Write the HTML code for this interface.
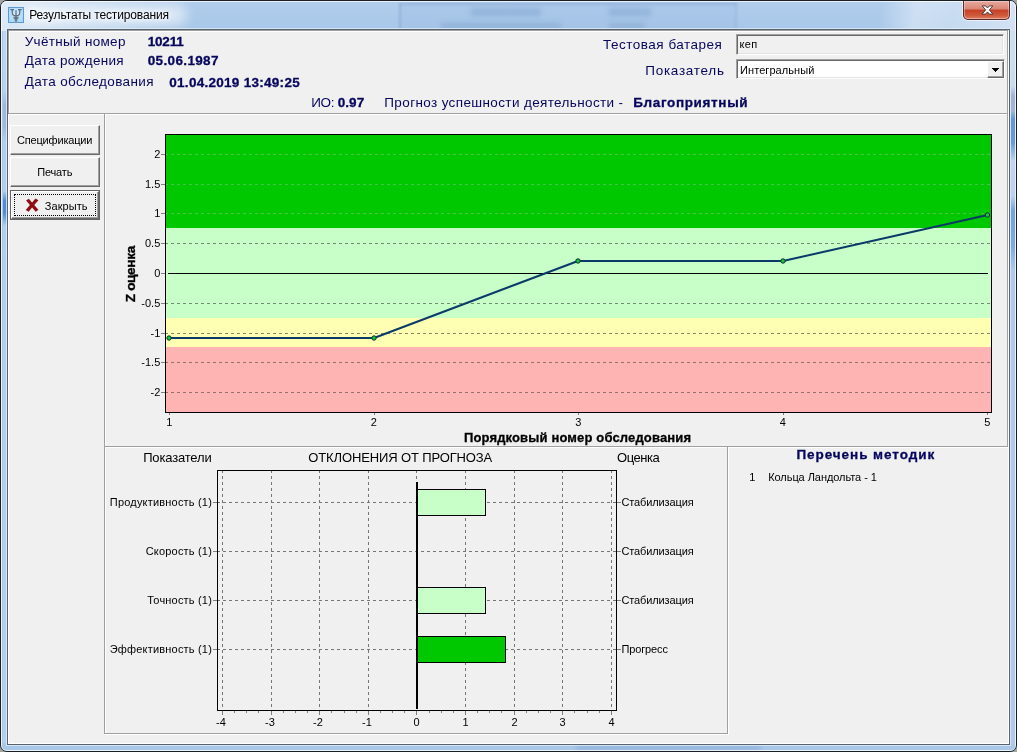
<!DOCTYPE html>
<html lang="ru"><head><meta charset="utf-8"><title>Результаты тестирования</title>
<style>
html,body{margin:0;padding:0;}
body{width:1017px;height:752px;overflow:hidden;background:#a4a4a0;position:relative;font-family:"Liberation Sans",sans-serif;}
.abs{position:absolute;}
.t{position:absolute;white-space:nowrap;color:#000;}
#win{position:absolute;left:0;top:0;width:1015px;height:750px;border:1px solid #1a1f26;border-radius:7px;overflow:hidden;
 background:#aac9e9;}
#glass{position:absolute;left:0;top:0;width:1015px;height:30px;
 background:
  linear-gradient(90deg,rgba(255,255,255,.6) 0px,rgba(255,255,255,.3) 70px,rgba(255,255,255,0) 175px),
  linear-gradient(100deg,rgba(255,255,255,0) 868px,rgba(255,255,255,.4) 903px,rgba(255,255,255,.33) 940px,rgba(255,255,255,.5) 1015px),
  linear-gradient(180deg,#b1cdec 0,#a8c7e8 28px,#a9c8e8 100%);}
#behind{position:absolute;left:398px;top:2px;width:338px;height:27px;background:rgba(110,155,215,.07);box-shadow:inset 2px 2px 1px rgba(70,110,170,.22),inset -2px 0 1px rgba(70,110,170,.12);filter:blur(1.2px);}
.bl{position:absolute;background:rgba(70,110,170,.2);filter:blur(2.5px);}
#hl{position:absolute;left:0;top:0;width:1013px;height:748px;border:1px solid rgba(255,255,255,.75);border-radius:6px 6px 5px 5px;}
#inner{position:absolute;left:6px;top:28px;width:1001px;height:714px;border:1px solid #59636e;box-shadow:0 0 0 1px rgba(225,236,248,.8);background:#f0f0f0;}
#client{position:absolute;left:8px;top:30px;width:1001px;height:714px;background:#f0f0f0;}
.etch{position:absolute;box-sizing:border-box;border:1px solid #a0a0a0;box-shadow:inset 1px 1px 0 #fff,1px 1px 0 #fff;}
.panel{position:absolute;box-sizing:border-box;border:1px solid;border-color:#a0a0a0 #fff #fff #a0a0a0;}
.btn{position:absolute;box-sizing:border-box;background:#f0f0f0;border:1px solid;border-color:#fff #696969 #696969 #fff;box-shadow:inset -1px -1px 0 #a0a0a0,inset 1px 1px 0 #f0f0f0;}
.edit{position:absolute;box-sizing:border-box;border:1px solid;border-color:#a0a0a0 #fff #fff #a0a0a0;box-shadow:inset 1px 1px 0 #696969,inset -1px -1px 0 #e3e3e3;}
#closebtn{position:absolute;left:962px;top:0;width:47px;height:19px;box-sizing:border-box;border:1px solid #5b2a2a;border-top:none;border-radius:0 0 5px 5px;
 background:linear-gradient(180deg,#e6a99d 0,#d98676 45%,#c63f26 50%,#cf5a3a 80%,#dd8064 100%);box-shadow:inset 0 0 0 1px rgba(255,255,255,.35),0 0 0 1px rgba(255,255,255,.55);}
#icon{position:absolute;left:7px;top:6px;width:16px;height:16px;}
#ov{position:absolute;left:0;top:0;width:1017px;height:752px;will-change:transform;}
#ls{position:absolute;left:2px;top:30px;width:4px;height:712px;background:linear-gradient(180deg,rgba(255,255,255,.25) 0,rgba(255,255,255,.2) 60px,rgba(150,170,195,.55) 75px,rgba(150,170,195,.5) 95px,rgba(255,255,255,.1) 110px,rgba(255,255,255,.1) 160px,rgba(50,120,210,.75) 170px,rgba(50,120,210,.75) 182px,rgba(255,255,255,.12) 195px,rgba(255,255,255,.12) 100%);}
#rs{position:absolute;left:1010px;top:30px;width:4px;height:712px;background:linear-gradient(180deg,rgba(255,255,255,.4) 0,rgba(255,255,255,.35) 55px,rgba(150,168,192,.6) 65px,rgba(150,168,192,.55) 80px,rgba(70,130,210,.7) 88px,rgba(70,130,210,.65) 112px,rgba(255,255,255,.25) 130px,rgba(255,255,255,.2) 165px,rgba(70,130,210,.55) 180px,rgba(70,130,210,.45) 215px,rgba(255,255,255,.05) 240px,rgba(255,255,255,.05) 100%);}
#tglow{position:absolute;left:18px;top:3px;width:168px;height:22px;border-radius:11px;background:rgba(255,255,255,.55);filter:blur(6px);}
#bdark{position:absolute;left:575px;top:744px;width:185px;height:5px;background:rgba(90,130,185,.28);filter:blur(2px);}

</style></head>
<body>
<div id="win">
 <div id="glass"></div>
 <div id="behind"></div>
 <div class="bl" style="left:470px;top:7px;width:70px;height:8px"></div>
 <div class="bl" style="left:440px;top:22px;width:120px;height:6px"></div>
 <div class="bl" style="left:608px;top:7px;width:42px;height:8px"></div>
 <div class="bl" style="left:608px;top:22px;width:36px;height:6px"></div>
 <div id="ls"></div>
 <div id="rs"></div>
 <div id="bdark"></div>
 <div id="tglow"></div>
 <div id="hl"></div>
 <div id="inner"></div>
 <svg id="icon" viewBox="0 0 16 16">
  <defs><radialGradient id="ig" cx="50%" cy="45%" r="60%"><stop offset="0" stop-color="#d2ebfc"/><stop offset="1" stop-color="#a6d6f8"/></radialGradient></defs>
  <rect x="0.5" y="0.5" width="15" height="15" fill="url(#ig)" stroke="#5f96d4"/>
  <path d="M2.2 2.7 H6 M10 2.7 H13.8 M4.3 2.7 V6.3 C4.3 8.2 6 8.8 8 8.8 C10 8.8 11.7 8.2 11.7 6.3 V2.7 M8 3.2 V15" fill="none" stroke="#56646f" stroke-width="1.25" opacity=".9"/>
  <path d="M5.4 10.4 H10.6 M5.8 11.6 H10.2 M6.6 13.2 H9.4" fill="none" stroke="#5f6d78" stroke-width="1.2" opacity=".85"/>
 </svg>
 <div id="closebtn">
  <svg class="abs" style="left:17px;top:3.5px" width="13" height="10" viewBox="0 0 13 11" preserveAspectRatio="none">
   <path d="M1.2 1 L4.6 1 L6.5 3.3 L8.4 1 L11.8 1 L8.3 5.4 L11.9 10 L8.4 10 L6.5 7.6 L4.6 10 L1.1 10 L4.7 5.4 Z" fill="#fff" stroke="#4a3a40" stroke-width="1" stroke-linejoin="round"/>
  </svg>
 </div>
</div>

<div id="client">
 <div class="etch" style="left:0;top:0;width:1000px;height:84px"></div>
 <div class="etch" style="left:96px;top:83px;width:904px;height:334px"></div>
 <div class="etch" style="left:96px;top:416px;width:624px;height:288px"></div>
 <div class="abs" style="left:0;top:85px;width:1px;height:629px;background:#fff"></div>
 <div class="abs" style="left:0;top:713px;width:1001px;height:1px;background:#fff"></div>
 <div class="abs" style="left:1000px;top:418px;width:1px;height:296px;background:#fff"></div>
 <div class="edit" style="left:728px;top:4px;width:268px;height:21px;background:#f0f0f0"></div>
 <div class="edit" style="left:728px;top:29px;width:269px;height:20px;background:#fff">
   <div class="btn" style="left:250px;top:1px;width:17px;height:17px;box-shadow:inset -1px -1px 0 #a0a0a0">
     <svg class="abs" style="left:4px;top:6px" width="7" height="4" viewBox="0 0 7 4" shape-rendering="crispEdges"><path d="M0 0 H7 L3.5 4 Z" fill="#000"/></svg>
   </div>
 </div>
 <div class="btn" style="left:2px;top:95px;width:90px;height:30px"></div>
 <div class="btn" style="left:2px;top:127px;width:90px;height:30px"></div>
 <div class="abs" style="left:2px;top:160px;width:90px;height:30px;box-sizing:border-box;border:1px solid #646464">
   <div class="btn" style="left:0;top:0;width:88px;height:28px"></div>
   <div class="abs" style="left:3px;top:3px;width:80px;height:20px;border:1px dotted #000"></div>
   <svg class="abs" style="left:13.5px;top:7px" width="14.5" height="14.5" viewBox="0 0 16 16">
     <path d="M1.2 2.8 L4.2 0.8 L7.8 5 L11.6 0.6 L14.8 2.6 L10.2 7.8 L14.8 13 L11.8 15.2 L7.8 10.4 L4 15.2 L0.8 13.2 L5.4 7.8 Z" fill="#8e0c12"/>
   </svg>
 </div>
</div>
<div id="ov">
<svg class="abs" style="left:105px;top:114px" width="904" height="333" viewBox="0 0 904 333" shape-rendering="crispEdges">
<rect x="61" y="21" width="825" height="93" fill="#00c800"/>
<rect x="61" y="114" width="825" height="90" fill="#c8ffc8"/>
<rect x="61" y="204" width="825" height="29" fill="#ffffb4"/>
<rect x="61" y="233" width="825" height="65" fill="#ffb4b4"/>
<rect x="56" y="40" width="4" height="1" fill="#808080"/>
<line x1="60" y1="40.5" x2="886" y2="40.5" stroke="#46c446" stroke-width="1" stroke-dasharray="3 3"/>
<rect x="56" y="70" width="4" height="1" fill="#808080"/>
<line x1="60" y1="70.5" x2="886" y2="70.5" stroke="#46c446" stroke-width="1" stroke-dasharray="3 3"/>
<rect x="56" y="99" width="4" height="1" fill="#808080"/>
<line x1="60" y1="99.5" x2="886" y2="99.5" stroke="#46c446" stroke-width="1" stroke-dasharray="3 3"/>
<rect x="56" y="129" width="4" height="1" fill="#808080"/>
<line x1="60" y1="129.5" x2="886" y2="129.5" stroke="#6f8f6f" stroke-width="1" stroke-dasharray="3 3"/>
<rect x="56" y="159" width="4" height="1" fill="#808080"/>
<rect x="63" y="159" width="820" height="1" fill="#000"/>
<rect x="56" y="189" width="4" height="1" fill="#808080"/>
<line x1="60" y1="189.5" x2="886" y2="189.5" stroke="#6f8f6f" stroke-width="1" stroke-dasharray="3 3"/>
<rect x="56" y="219" width="4" height="1" fill="#808080"/>
<line x1="60" y1="219.5" x2="886" y2="219.5" stroke="#8a8a62" stroke-width="1" stroke-dasharray="3 3"/>
<rect x="56" y="248" width="4" height="1" fill="#808080"/>
<line x1="60" y1="248.5" x2="886" y2="248.5" stroke="#987070" stroke-width="1" stroke-dasharray="3 3"/>
<rect x="56" y="278" width="4" height="1" fill="#808080"/>
<line x1="60" y1="278.5" x2="886" y2="278.5" stroke="#987070" stroke-width="1" stroke-dasharray="3 3"/>
<rect x="60" y="20" width="827" height="1" fill="#000"/>
<rect x="60" y="298" width="827" height="1" fill="#000"/>
<rect x="60" y="20" width="1" height="279" fill="#000"/>
<rect x="886" y="20" width="1" height="279" fill="#000"/>
<rect x="64" y="299" width="1" height="2" fill="#808080"/>
<rect x="269" y="299" width="1" height="2" fill="#808080"/>
<rect x="473" y="299" width="1" height="2" fill="#808080"/>
<rect x="678" y="299" width="1" height="2" fill="#808080"/>
<rect x="882" y="299" width="1" height="2" fill="#808080"/>
<polyline points="64,224 269,224 473,147 678,147 882.5,101" fill="none" stroke="#0a3a68" stroke-width="2" shape-rendering="auto" stroke-linejoin="round"/>
<circle cx="64" cy="224" r="2.2" fill="#14c83c" stroke="#0a3030" stroke-width="1" shape-rendering="auto"/>
<circle cx="269" cy="224" r="2.2" fill="#14c83c" stroke="#0a3030" stroke-width="1" shape-rendering="auto"/>
<circle cx="473" cy="147" r="2.2" fill="#14c83c" stroke="#0a3030" stroke-width="1" shape-rendering="auto"/>
<circle cx="678" cy="147" r="2.2" fill="#14c83c" stroke="#0a3030" stroke-width="1" shape-rendering="auto"/>
<circle cx="882.5" cy="101" r="2.2" fill="#14c83c" stroke="#0a3030" stroke-width="1" shape-rendering="auto"/>
<g font-family="&quot;Liberation Sans&quot;, sans-serif" font-size="11" fill="#000" text-anchor="end">
<text x="55.30000000000001" y="44">2</text>
<text x="55.30000000000001" y="74">1.5</text>
<text x="55.30000000000001" y="103">1</text>
<text x="55.30000000000001" y="133">0.5</text>
<text x="55.30000000000001" y="163">0</text>
<text x="55.30000000000001" y="193">-0.5</text>
<text x="55.30000000000001" y="223">-1</text>
<text x="55.30000000000001" y="252">-1.5</text>
<text x="55.30000000000001" y="282">-2</text>
</g>
<g font-family="&quot;Liberation Sans&quot;, sans-serif" font-size="11" fill="#000" text-anchor="middle">
<text x="64.3" y="312">1</text>
<text x="268.8" y="312">2</text>
<text x="473.3" y="312">3</text>
<text x="677.8" y="312">4</text>
<text x="882.3" y="312">5</text>
</g>
<text transform="translate(30.19999999999999,188.2) rotate(-90)" font-family="&quot;Liberation Sans&quot;, sans-serif" font-size="13.6" font-weight="bold" fill="#000" stroke="#000" stroke-width="0.35" textLength="56.4" lengthAdjust="spacing">Z оценка</text>
</svg>
<svg class="abs" style="left:106px;top:466px" width="620" height="266" viewBox="0 0 620 266" shape-rendering="crispEdges">
<line x1="116.5" y1="4" x2="116.5" y2="244" stroke="#757575" stroke-width="1" stroke-dasharray="3 3"/>
<line x1="165.5" y1="4" x2="165.5" y2="244" stroke="#757575" stroke-width="1" stroke-dasharray="3 3"/>
<line x1="213.5" y1="4" x2="213.5" y2="244" stroke="#757575" stroke-width="1" stroke-dasharray="3 3"/>
<line x1="262.5" y1="4" x2="262.5" y2="244" stroke="#757575" stroke-width="1" stroke-dasharray="3 3"/>
<line x1="310.5" y1="4" x2="310.5" y2="244" stroke="#757575" stroke-width="1" stroke-dasharray="3 3"/>
<line x1="359.5" y1="4" x2="359.5" y2="244" stroke="#757575" stroke-width="1" stroke-dasharray="3 3"/>
<line x1="408.5" y1="4" x2="408.5" y2="244" stroke="#757575" stroke-width="1" stroke-dasharray="3 3"/>
<line x1="456.5" y1="4" x2="456.5" y2="244" stroke="#757575" stroke-width="1" stroke-dasharray="3 3"/>
<line x1="505.5" y1="4" x2="505.5" y2="244" stroke="#757575" stroke-width="1" stroke-dasharray="3 3"/>
<line x1="111" y1="36.5" x2="510" y2="36.5" stroke="#757575" stroke-width="1" stroke-dasharray="3 3"/>
<rect x="107" y="36" width="4" height="1" fill="#808080"/>
<rect x="511" y="36" width="4" height="1" fill="#808080"/>
<line x1="111" y1="85.5" x2="510" y2="85.5" stroke="#757575" stroke-width="1" stroke-dasharray="3 3"/>
<rect x="107" y="85" width="4" height="1" fill="#808080"/>
<rect x="511" y="85" width="4" height="1" fill="#808080"/>
<line x1="111" y1="134.5" x2="510" y2="134.5" stroke="#757575" stroke-width="1" stroke-dasharray="3 3"/>
<rect x="107" y="134" width="4" height="1" fill="#808080"/>
<rect x="511" y="134" width="4" height="1" fill="#808080"/>
<line x1="111" y1="183.5" x2="510" y2="183.5" stroke="#757575" stroke-width="1" stroke-dasharray="3 3"/>
<rect x="107" y="183" width="4" height="1" fill="#808080"/>
<rect x="511" y="183" width="4" height="1" fill="#808080"/>
<rect x="311.5" y="23.5" width="68" height="26" fill="#c8ffc8" stroke="#000" stroke-width="1"/>
<rect x="311.5" y="121.5" width="68" height="26" fill="#c8ffc8" stroke="#000" stroke-width="1"/>
<rect x="311.5" y="170.5" width="88" height="26" fill="#00c800" stroke="#000" stroke-width="1"/>
<rect x="310" y="16" width="2" height="227" fill="#000"/>
<rect x="111" y="4" width="400" height="1" fill="#000"/>
<rect x="111" y="244" width="400" height="1" fill="#000"/>
<rect x="111" y="4" width="1" height="241" fill="#000"/>
<rect x="510" y="4" width="1" height="241" fill="#000"/>
<rect x="116" y="245" width="1" height="4" fill="#808080"/>
<rect x="128" y="245" width="1" height="2" fill="#808080"/>
<rect x="140" y="245" width="1" height="2" fill="#808080"/>
<rect x="152" y="245" width="1" height="2" fill="#808080"/>
<rect x="165" y="245" width="1" height="4" fill="#808080"/>
<rect x="177" y="245" width="1" height="2" fill="#808080"/>
<rect x="189" y="245" width="1" height="2" fill="#808080"/>
<rect x="201" y="245" width="1" height="2" fill="#808080"/>
<rect x="213" y="245" width="1" height="4" fill="#808080"/>
<rect x="225" y="245" width="1" height="2" fill="#808080"/>
<rect x="238" y="245" width="1" height="2" fill="#808080"/>
<rect x="250" y="245" width="1" height="2" fill="#808080"/>
<rect x="262" y="245" width="1" height="4" fill="#808080"/>
<rect x="274" y="245" width="1" height="2" fill="#808080"/>
<rect x="286" y="245" width="1" height="2" fill="#808080"/>
<rect x="298" y="245" width="1" height="2" fill="#808080"/>
<rect x="310" y="245" width="1" height="4" fill="#808080"/>
<rect x="323" y="245" width="1" height="2" fill="#808080"/>
<rect x="335" y="245" width="1" height="2" fill="#808080"/>
<rect x="347" y="245" width="1" height="2" fill="#808080"/>
<rect x="359" y="245" width="1" height="4" fill="#808080"/>
<rect x="371" y="245" width="1" height="2" fill="#808080"/>
<rect x="383" y="245" width="1" height="2" fill="#808080"/>
<rect x="395" y="245" width="1" height="2" fill="#808080"/>
<rect x="408" y="245" width="1" height="4" fill="#808080"/>
<rect x="420" y="245" width="1" height="2" fill="#808080"/>
<rect x="432" y="245" width="1" height="2" fill="#808080"/>
<rect x="444" y="245" width="1" height="2" fill="#808080"/>
<rect x="456" y="245" width="1" height="4" fill="#808080"/>
<rect x="468" y="245" width="1" height="2" fill="#808080"/>
<rect x="481" y="245" width="1" height="2" fill="#808080"/>
<rect x="493" y="245" width="1" height="2" fill="#808080"/>
<rect x="505" y="245" width="1" height="4" fill="#808080"/>
<g font-family="&quot;Liberation Sans&quot;, sans-serif" font-size="11" fill="#000" text-anchor="middle">
<text x="115.0" y="260">-4</text>
<text x="164.0" y="260">-3</text>
<text x="212.0" y="260">-2</text>
<text x="261.0" y="260">-1</text>
<text x="310.5" y="260">0</text>
<text x="359.5" y="260">1</text>
<text x="408.5" y="260">2</text>
<text x="456.5" y="260">3</text>
<text x="505.5" y="260">4</text>
</g>
<g font-family="&quot;Liberation Sans&quot;, sans-serif" font-size="11" fill="#000" text-anchor="end">
<text x="106" y="40" letter-spacing="0.19">Продуктивность (1)</text>
<text x="106" y="89" letter-spacing="0.19">Скорость (1)</text>
<text x="106" y="138" letter-spacing="0.19">Точность (1)</text>
<text x="106" y="187" letter-spacing="0.19">Эффективность (1)</text>
</g>
<g font-family="&quot;Liberation Sans&quot;, sans-serif" font-size="11" fill="#000">
<text x="515.4" y="40" letter-spacing="-0.12">Стабилизация</text>
<text x="515.4" y="89" letter-spacing="-0.12">Стабилизация</text>
<text x="515.4" y="138" letter-spacing="-0.12">Стабилизация</text>
<text x="515.4" y="187" letter-spacing="-0.12">Прогресс</text>
</g>
</svg>
<span class="t" style="left:29.2px;top:8px;font-size:12px;line-height:14px;letter-spacing:-0.14px;text-shadow:0 0 4px #fff,0 0 7px #fff;">Результаты тестирования</span>
<span class="t" style="left:24.7px;top:34px;font-size:13.5px;line-height:15px;letter-spacing:0.31px;color:#06065e;">Учётный номер</span>
<span class="t" style="left:24.7px;top:53px;font-size:13.5px;line-height:15px;letter-spacing:0.31px;color:#06065e;">Дата рождения</span>
<span class="t" style="left:24.7px;top:74px;font-size:13.5px;line-height:15px;letter-spacing:0.38px;color:#06065e;">Дата обследования</span>
<span class="t" style="left:147.7px;top:34px;font-size:13.5px;line-height:15px;letter-spacing:-0.17px;font-weight:bold;-webkit-text-stroke:0.3px;color:#06065e;">10211</span>
<span class="t" style="left:147.7px;top:53px;font-size:13.5px;line-height:15px;letter-spacing:0.36px;font-weight:bold;-webkit-text-stroke:0.3px;color:#06065e;">05.06.1987</span>
<span class="t" style="left:169.3px;top:75px;font-size:13.5px;line-height:15px;letter-spacing:0.28px;font-weight:bold;-webkit-text-stroke:0.3px;color:#06065e;">01.04.2019 13:49:25</span>
<span class="t" style="left:311.3px;top:95px;font-size:13.5px;line-height:15px;letter-spacing:-0.4px;color:#06065e;">ИО:</span>
<span class="t" style="left:337.7px;top:95px;font-size:13.5px;line-height:15px;letter-spacing:0.08px;font-weight:bold;-webkit-text-stroke:0.3px;color:#06065e;">0.97</span>
<span class="t" style="left:384.3px;top:95px;font-size:13.5px;line-height:15px;letter-spacing:0.37px;color:#06065e;">Прогноз успешности деятельности -</span>
<span class="t" style="left:633.2px;top:95px;font-size:13.5px;line-height:15px;letter-spacing:0.65px;font-weight:bold;-webkit-text-stroke:0.3px;color:#06065e;">Благоприятный</span>
<span class="t" style="left:603.1px;top:37px;font-size:13.5px;line-height:15px;letter-spacing:0.49px;color:#06065e;">Тестовая батарея</span>
<span class="t" style="left:645.2px;top:63px;font-size:13.5px;line-height:15px;letter-spacing:0.74px;color:#06065e;">Показатель</span>
<span class="t" style="left:739.4px;top:38px;font-size:11px;line-height:12px;letter-spacing:0.42px;">кеп</span>
<span class="t" style="left:740.1px;top:64px;font-size:11px;line-height:12px;letter-spacing:0.06px;">Интегральный</span>
<span class="t" style="left:17.0px;top:134px;font-size:11px;line-height:12px;letter-spacing:-0.18px;">Спецификации</span>
<span class="t" style="left:37.2px;top:166px;font-size:11px;line-height:12px;letter-spacing:-0.16px;">Печать</span>
<span class="t" style="left:44.7px;top:200px;font-size:11px;line-height:12px;letter-spacing:0.09px;">Закрыть</span>
<span class="t" style="left:143.2px;top:450px;font-size:13px;line-height:15px;letter-spacing:-0.17px;">Показатели</span>
<span class="t" style="left:308.3px;top:450px;font-size:13px;line-height:15px;letter-spacing:-0.13px;">ОТКЛОНЕНИЯ ОТ ПРОГНОЗА</span>
<span class="t" style="left:617.1px;top:450px;font-size:13px;line-height:15px;letter-spacing:-0.5px;">Оценка</span>
<span class="t" style="left:463.9px;top:430px;font-size:13px;line-height:15px;letter-spacing:0.15px;font-weight:bold;-webkit-text-stroke:0.3px;">Порядковый номер обследования</span>
<span class="t" style="left:796.4px;top:447px;font-size:13.5px;line-height:15px;letter-spacing:0.95px;font-weight:bold;-webkit-text-stroke:0.3px;color:#06065e;">Перечень методик</span>
<span class="t" style="left:749.3px;top:471px;font-size:11px;line-height:12px;">1</span>
<span class="t" style="left:768.2px;top:471px;font-size:11px;line-height:12px;letter-spacing:-0.06px;">Кольца Ландольта - 1</span>
</div>

</body></html>
